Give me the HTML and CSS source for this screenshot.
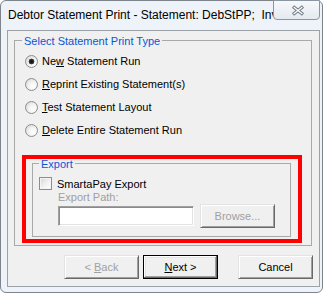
FILE: index.html
```html
<!DOCTYPE html>
<html>
<head>
<meta charset="utf-8">
<link rel="stylesheet" href="styles.css">
</head>
<body>
<div class="window">
  <div class="titlebar">
    <div class="title">Debtor Statement Print - Statement: DebStPP;&nbsp; Inv</div>
    <div class="close">
      <svg width="14" height="11" viewBox="0 0 14 11">
        <path d="M2 1.5 L12 9.5 M12 1.5 L2 9.5" stroke="#6e7885" stroke-width="3.4" fill="none"/>
        <path d="M2.6 2 L11.4 9 M11.4 2 L2.6 9" stroke="#ffffff" stroke-width="1.3" fill="none"/>
      </svg>
    </div>
  </div>
  <div class="client">
    <fieldset class="group main-group">
      <legend>Select Statement Print Type</legend>
      <div class="radios">
        <div class="radio-row"><span class="radio checked"></span><span>Ne<u>w</u> Statement Run</span></div>
        <div class="radio-row"><span class="radio"></span><span><u>R</u>eprint Existing Statement(s)</span></div>
        <div class="radio-row"><span class="radio"></span><span><u>T</u>est Statement Layout</span></div>
        <div class="radio-row"><span class="radio"></span><span><u>D</u>elete Entire Statement Run</span></div>
      </div>
      <div class="highlight">
        <fieldset class="group export-group">
          <legend>Export</legend>
          <div class="check-row"><span class="checkbox"></span><span>SmartaPay Export</span></div>
          <div class="path-label">Export Path:</div>
          <div class="path-row">
            <div class="textbox"></div>
            <div class="btn disabled"><span>Browse...</span></div>
          </div>
        </fieldset>
      </div>
    </fieldset>
    <div class="buttons">
      <div class="btn disabled"><span>&lt; <u>B</u>ack</span></div>
      <div class="btn default"><span><u>N</u>ext &gt;</span></div>
      <div class="btn cancel"><span>Cancel</span></div>
    </div>
  </div>
</div>
</body>
</html>
```

FILE: styles.css
```css
html, body {
  margin: 0;
  padding: 0;
  background: #ffffff;
}

.window {
  box-sizing: border-box;
  width: 323px;
  height: 293px;
  border: 1px solid #7d848b;
  border-radius: 6px;
  background: #edf3f8;
  padding: 0 2px 0 6px;
  font-family: "Liberation Sans", Arial, sans-serif;
  font-size: 11px;
  color: #000;
}

.titlebar {
  display: flex;
  align-items: flex-start;
  height: 29px;
}

.title {
  flex: 1;
  min-width: 0;
  overflow: hidden;
  white-space: nowrap;
  font-size: 12px;
  line-height: 14px;
  padding: 7px 0 0 1px;
}

.close {
  box-sizing: border-box;
  width: 47px;
  height: 20px;
  margin-top: -1px;
  border: 1px solid #8c96a1;
  border-radius: 0 0 4px 4px;
  background: linear-gradient(#f7f9fb, #e4eaf0);
  display: flex;
  align-items: center;
  justify-content: center;
  padding-left: 3px;
}

.close svg {
  display: block;
}

.client {
  box-sizing: border-box;
  height: 257px;
  border: 1px solid #9ba1a7;
  background: #f0f0f0;
  display: flex;
  flex-direction: column;
}

.group {
  min-width: 0;
  padding: 0;
  border: 1px solid #a9a9a9;
}

.group legend {
  color: #0a56d6;
  font-size: 11px;
  line-height: 8px;
  padding: 2px 2px 0;
}

.main-group {
  margin: 4px 7px 0 6px;
}

.main-group > legend {
  margin-left: 7px;
}

.radios {
  display: flex;
  flex-direction: column;
  gap: 7px;
  padding: 8px 0 0 10px;
}

.radio-row {
  display: flex;
  align-items: center;
  height: 16px;
  gap: 4px;
  white-space: nowrap;
}

.radio {
  box-sizing: border-box;
  width: 13px;
  height: 13px;
  border-radius: 50%;
  border: 1px solid #8b8d8f;
  background: radial-gradient(circle at 65% 65%, #ffffff 0, #f2f2f2 45%, #cfcfcf 100%);
  flex: none;
}

.radio.checked {
  background:
    radial-gradient(circle at 50% 50%, #111 0, #2a2a2a 2px, #444 2.6px, transparent 3.2px),
    radial-gradient(circle at 65% 65%, #ffffff 0, #f2f2f2 45%, #cfcfcf 100%);
}

.highlight {
  box-sizing: border-box;
  height: 88px;
  width: 280px;
  margin: 17px 0 2px 7px;
  border: 4px solid #ff0000;
}

.export-group {
  box-sizing: border-box;
  height: 79px;
  margin: -1px 7px 0 6px;
}

.export-group > legend {
  margin-left: 6px;
}

.check-row {
  display: flex;
  align-items: center;
  gap: 5px;
  height: 13px;
  margin: 9px 0 0 6px;
  white-space: nowrap;
}

.checkbox {
  box-sizing: border-box;
  width: 13px;
  height: 13px;
  border: 1px solid #8b8d8f;
  background: linear-gradient(135deg, #d6d6d6 0, #f2f2f2 55%, #ffffff 100%);
  box-shadow: inset 0 0 0 1px #f4f4f4;
  flex: none;
}

.path-label {
  color: #a0a0a0;
  line-height: 13px;
  margin: 1px 0 0 25px;
}

.path-row {
  display: flex;
  align-items: center;
  gap: 6px;
  height: 24px;
  margin-left: 25px;
}

.textbox {
  box-sizing: border-box;
  width: 136px;
  height: 20px;
  background: #ffffff;
  border: 1px solid;
  border-color: #a0a0a0 #ffffff #ffffff #a0a0a0;
  box-shadow: inset 1px 1px #8a8a8a, inset -1px -1px #e3e3e3;
}

.btn {
  box-sizing: border-box;
  width: 75px;
  height: 24px;
  flex: none;
  display: flex;
  align-items: center;
  justify-content: center;
  background: #f0f0f0;
  border: 1px solid;
  border-color: #e3e3e3 #696969 #696969 #e3e3e3;
  box-shadow: inset 1px 1px #ffffff, inset -1px -1px #a0a0a0;
  white-space: pre;
}

.btn.disabled {
  color: #a0a0a0;
}

.btn.default {
  border-color: #000;
  box-shadow: inset -1px -1px #696969, inset 1px 1px #ffffff, inset -2px -2px #a0a0a0, inset 2px 2px #e3e3e3;
}

.buttons {
  display: flex;
  justify-content: flex-end;
  margin: 9px 6px 0 0;
  gap: 4px;
}

.btn.cancel {
  margin-left: 16px;
}
```
